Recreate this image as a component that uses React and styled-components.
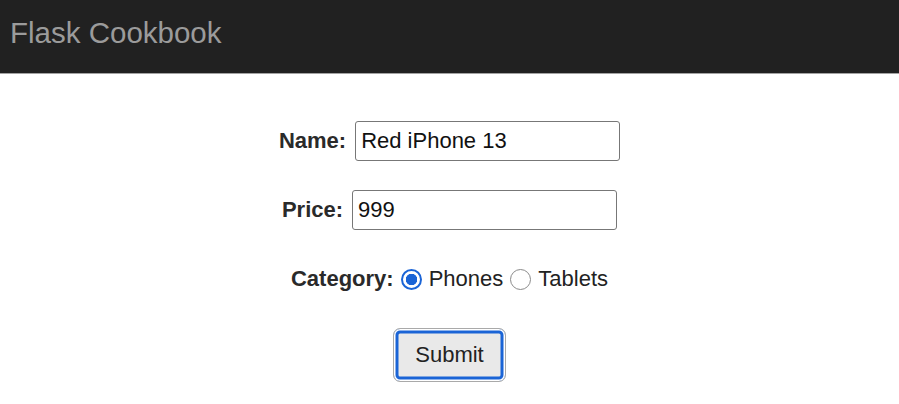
import React, { useState } from "react";
import styled, { createGlobalStyle } from "styled-components";

const GlobalStyle = createGlobalStyle`
  html, body {
    margin: 0;
    padding: 0;
    background: #fff;
    font-family: "Liberation Sans", Arial, Helvetica, sans-serif;
  }
`;

const Header = styled.header`
  height: 74px;
  background: #212121;
  border-bottom: 1px solid #a3a3a3;
  display: flex;
  align-items: flex-start;
  padding: 15px 10px 0;
  box-sizing: border-box;
`;

const Brand = styled.div`
  color: #9b9b9b;
  font-size: 29.5px;
  line-height: 36px;
`;

const Form = styled.form`
  display: flex;
  flex-direction: column;
  align-items: center;
  gap: 29px;
  padding-top: 47px;
`;

const Row = styled.div`
  display: flex;
  align-items: center;
  justify-content: center;
  min-height: 40px;
  gap: ${(p) => p.$gap || 9}px;
  font-size: 22px;
  color: #222;
`;

const Label = styled.label`
  font-weight: bold;
  color: #2a2a2a;
`;

const TextInput = styled.input`
  width: 265px;
  height: 40px;
  box-sizing: border-box;
  border: 1px solid #777;
  border-radius: 3px;
  padding: 0 5px;
  font-family: inherit;
  font-size: 22px;
  color: #111;
  outline: none;
`;

const Option = styled.label`
  display: flex;
  align-items: center;
  gap: 7px;
  color: #222;
`;

const Radio = styled.input.attrs({ type: "radio" })`
  appearance: none;
  margin: 0;
  width: 21px;
  height: 21px;
  border-radius: 50%;
  box-sizing: border-box;
  border: 1.5px solid #8a8a8a;
  background: #fff;

  &:checked {
    border: 2px solid #1a64d6;
    background: radial-gradient(circle, #1a64d6 0 5.5px, #fff 6px);
  }
`;

const SubmitButton = styled.button`
  width: 113px;
  height: 54px;
  box-sizing: border-box;
  border: 1px solid #a9a9a9;
  border-radius: 7px;
  background: #e9e9e9;
  box-shadow: inset 0 0 0 1.5px #fff, inset 0 0 0 4.5px #1a64d6;
  font-family: inherit;
  font-size: 22px;
  color: #222;
  padding: 0;
  cursor: pointer;
`;

export default function App() {
  const [name, setName] = useState("Red iPhone 13");
  const [price, setPrice] = useState("999");
  const [category, setCategory] = useState("phones");

  return (
    <>
      <GlobalStyle />
      <Header>
        <Brand>Flask Cookbook</Brand>
      </Header>
      <Form onSubmit={(e) => e.preventDefault()}>
        <Row>
          <Label>Name:</Label>
          <TextInput value={name} onChange={(e) => setName(e.target.value)} />
        </Row>
        <Row>
          <Label>Price:</Label>
          <TextInput value={price} onChange={(e) => setPrice(e.target.value)} />
        </Row>
        <Row $gap={7}>
          <Label>Category:</Label>
          <Option>
            <Radio
              name="category"
              checked={category === "phones"}
              onChange={() => setCategory("phones")}
            />
            Phones
          </Option>
          <Option>
            <Radio
              name="category"
              checked={category === "tablets"}
              onChange={() => setCategory("tablets")}
            />
            Tablets
          </Option>
        </Row>
        <SubmitButton type="submit">Submit</SubmitButton>
      </Form>
    </>
  );
}
